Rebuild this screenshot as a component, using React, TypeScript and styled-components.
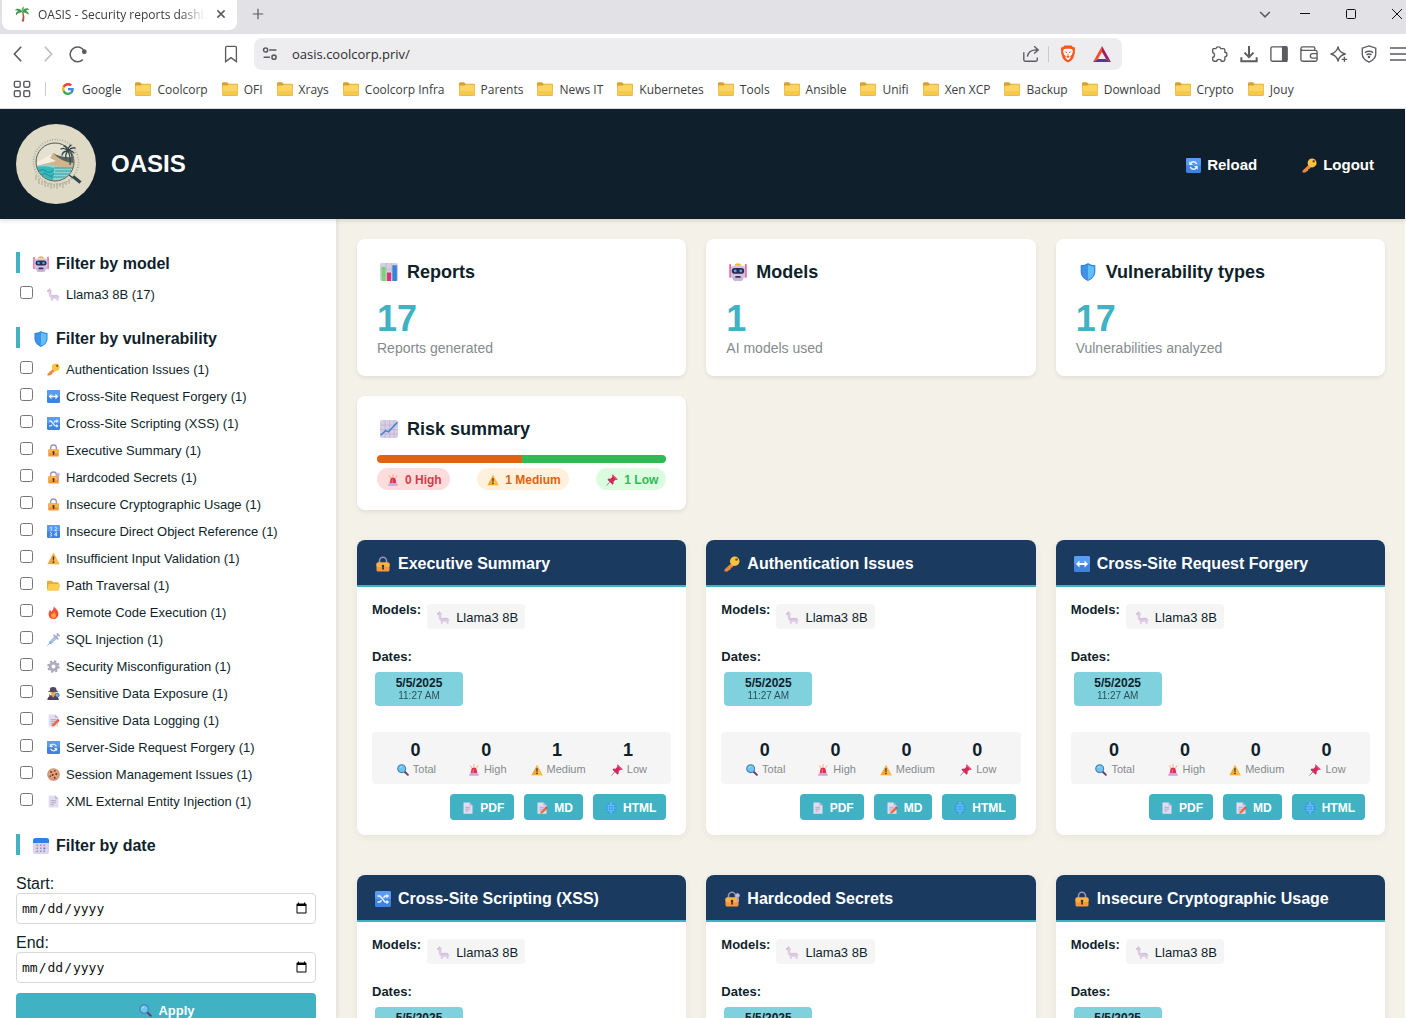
import React from 'react';
import styled, { createGlobalStyle } from 'styled-components';

/* ---------- palette ---------- */

const c = {
  night: '#0f1f2b',
  navy: '#1a3a5f',
  teal: '#40b2c3',
  tealSoft: '#7fd1dd',
  sand: '#f4f1e8',
  mute: '#858b8e',
  panel: '#f5f5f6',
  chrome: '#5b5b60',
};

const GlobalStyle = createGlobalStyle`
  *, *::before, *::after { box-sizing: border-box; }
  body {
    margin: 0;
    background: #fff;
    color: ${c.night};
    font-family: "Liberation Sans", Arial, sans-serif;
  }
  h1, h2, h3, p, ul { margin: 0; padding: 0; }
  ul { list-style: none; }
  button { font-family: inherit; cursor: pointer; }
`;

/* ---------- emoji drawings (32 x 32 grid) ---------- */

const blueTile = (
  <>
    <rect x="0" y="0" width="32" height="32" rx="3" fill="#3f83e0" />
    <rect x="0" y="0" width="32" height="16" rx="3" fill="#5a9cf0" />
  </>
);

const padlock = (
  <>
    <path d="M9 15V9.500a7 7 0 0 1 14 0V15" fill="none" stroke="#9a93b5" strokeWidth="3.200" />
    <rect x="3" y="13" width="26" height="18" rx="3" fill="#f3983b" />
    <rect x="3" y="13" width="26" height="9" rx="3" fill="#fbb347" />
    <circle cx="16" cy="20" r="2.600" fill="#4b2c35" />
    <path d="M15 20h2.400l.8 7h-4z" fill="#4b2c35" />
  </>
);

const page = (
  <>
    <path d="M4 1h16l8 8v22H4z" fill="#e3dcf0" />
    <path d="M20 1l8 8h-8z" fill="#b9acd0" />
    <path d="M9 14h13M9 19h13M9 24h8" stroke="#a99fc4" strokeWidth="2.200" />
  </>
);

const art: Record<string, React.ReactNode> = {
  robot: (
    <>
      <path d="M2 3v22M30 3v22" stroke="#e0457e" strokeWidth="2.600" strokeLinecap="round" />
      <path d="M10 5c0-6 12-6 12 0z" fill="#f6b53c" />
      <rect x="3" y="5" width="26" height="23" rx="6" fill="#d3c3e2" />
      <rect x="7" y="24" width="18" height="8" rx="4" fill="#c7b3d8" />
      <rect x="5" y="9" width="22" height="10" rx="5" fill="#2b2b50" />
      <circle cx="11" cy="14" r="2.600" fill="#4ba8ef" />
      <circle cx="21" cy="14" r="2.600" fill="#4ba8ef" />
      <rect x="11" y="23" width="10" height="3.400" rx="1.700" fill="#41304f" />
    </>
  ),
  llama: (
    <>
      <path d="M4 4l2-3 1.500 3 3 .5v3l-1 9c1 2 4 1.500 9 1.500 6-1 9 0 10 3l1-1c1 3-1 4-2 5v6h-3l-1-5-9-.5-1 5.500h-3l-.5-7C6 22 5 19 5 15V9L1 8.500V5.500z" fill="#dccbe3" stroke="#dccbe3" strokeWidth="1.500" />
      <path d="M1 6h4v2.500H1zM6 1l1.500 3h-3z" fill="#d9a79d" />
      <path d="M10 18q5 3 9 1t8 1" stroke="#c2aecf" strokeWidth="1.500" fill="none" />
    </>
  ),
  shield: (
    <>
      <path d="M16 0c4 3 8 3.500 13 4v11c0 8-6 14-13 17C9 29 3 23 3 15V4c5-.5 9-1 13-4z" fill="#2f83dd" />
      <path d="M16 2.500c3.500 2.500 7.500 3 11 3.500V15c0 7-4 12-11 15z" fill="#63bff8" />
      <path d="M16 2.500c-3.500 2.500-7.500 3-11 3.500V15c0 7 4 12 11 15z" fill="#3f93e6" />
    </>
  ),
  key: (
    <>
      <path d="M15 14L1 27v4h6.500l2.500-3 3-.5.500-3.500 3-1 4-5z" fill="#e8893d" />
      <circle cx="21.500" cy="10.500" r="9.500" fill="#fbc33f" />
      <circle cx="25" cy="7" r="2.600" fill="#7a4d26" />
    </>
  ),
  leftright: (
    <>
      {blueTile}
      <path d="M4 16l7-7v5h10V9l7 7-7 7v-5H11v5z" fill="#fff" />
    </>
  ),
  shuffle: (
    <>
      {blueTile}
      <path d="M5 10h5l10 12h5M5 22h5l3-3.500M17 13.500l3-3.500h5" stroke="#eaf4ff" strokeWidth="2.800" fill="none" />
      <path d="M23 5.500l5.500 4.500-5.500 4.500zM23 17.500l5.500 4.500-5.500 4.500z" fill="#eaf4ff" />
    </>
  ),
  lock: padlock,
  lockkey: (
    <>
      {padlock}
      <circle cx="27" cy="9" r="4.500" fill="#c8b8d8" />
      <path d="M25.500 11h3.500v12l-3.500-2z" fill="#b39fca" />
    </>
  ),
  numbers: (
    <>
      {blueTile}
      <path d="M8 7l2.500-2v9M19 6.500c2-2.500 6-.5 4.500 2.500L19 14h6M7 19c4-2 6 3 2 4 4 .5 3 6-2 4M23 27.500V18l-5 6.500h7" stroke="#eaf4ff" strokeWidth="2" fill="none" />
    </>
  ),
  warning: (
    <>
      <path d="M16 2L31 30H1z" fill="#f8a63c" />
      <path d="M16 2L31 30H18z" fill="#fbbd4d" />
      <path d="M14 11h4l-.8 10h-2.400z" fill="#4b2f2a" />
      <circle cx="16" cy="25" r="2.200" fill="#4b2f2a" />
    </>
  ),
  folder: (
    <>
      <path d="M0 6q0-2 2-2h10l3 4h12q2 0 2 2v17H2q-2 0-2-2z" fill="#e9a93a" />
      <path d="M4 12h26q2.500 0 2 2l-2 13q-.5 2-3 2H3q-3 0-2.500-3z" fill="#fbcd57" />
    </>
  ),
  fire: (
    <>
      <path d="M17 0c1 5 11 9 11 19 0 8-5 13-12 13S4 27 4 20c0-5 2-7 3-10 2 1 3 3 3.500 5 3-4 6.500-8 6.500-15z" fill="#ee4f35" />
      <path d="M17 13c1 4 5 6 5 11 0 4-3 6-6 6s-6-2-6-6c0-3 2-4 2.500-6l2 2.500c1.500-2 2.500-4 2.500-7.500z" fill="#fba234" />
    </>
  ),
  syringe: (
    <>
      <path d="M1 31l8-9" stroke="#8e97ad" strokeWidth="2" />
      <path d="M5 22L20 6l6.500 6.500L10 27H5z" fill="#86b4ea" />
      <path d="M9 19l9-9 5 5-9 8z" fill="#b5c6e6" />
      <path d="M17 5l10 10M24 8l4-4M25 2l5 5" stroke="#a9a6be" strokeWidth="3.500" strokeLinecap="round" />
    </>
  ),
  gear: (
    <>
      <circle cx="16" cy="16" r="12.500" fill="none" stroke="#aca6ba" strokeWidth="6" strokeDasharray="5 4.800" />
      <circle cx="16" cy="16" r="8.500" fill="none" stroke="#b0abbd" strokeWidth="7" />
    </>
  ),
  detective: (
    <>
      <path d="M1 32c0-8 6-12 14-12s14 4 14 12z" fill="#4c3e5d" />
      <path d="M11 20h8l-4 7z" fill="#e9b23c" />
      <circle cx="15" cy="14" r="6.500" fill="#efb04c" />
      <path d="M8 2q7-4 14 0l2 7q4 .5 5 2-14 4-27 0 1-1.500 5-2z" fill="#51456a" />
      <path d="M5 17l5 4-4 4z" fill="#7b4d8b" />
      <circle cx="25" cy="20" r="5" fill="#6fb7ea" stroke="#3d4f78" strokeWidth="1.800" />
      <path d="M23 25l-4 6" stroke="#3d4f78" strokeWidth="3" />
    </>
  ),
  memo: (
    <>
      {page}
      <path d="M12 27L24 14l5 5-12 11-6 1z" fill="#ee6a3d" />
      <path d="M24 14l2-2q3 0 4.500 4L29 19z" fill="#d8355f" />
    </>
  ),
  reload: (
    <>
      {blueTile}
      <path d="M23 13c-3-6-10-7-14-1M9 19c3 6 10 7 14 1" stroke="#eaf4ff" strokeWidth="3" fill="none" />
      <path d="M7 7v8h8zM25 25v-8h-8z" fill="#eaf4ff" />
    </>
  ),
  cookie: (
    <>
      <circle cx="16" cy="16" r="15.500" fill="#d08b68" />
      <circle cx="16" cy="15" r="13" fill="#e2a27a" />
      <g fill="#6d3a38">
        <circle cx="10" cy="10" r="2.600" />
        <circle cx="19" cy="7" r="2.200" />
        <circle cx="23" cy="15" r="2.800" />
        <circle cx="14" cy="17" r="2.600" />
        <circle cx="8" cy="20" r="2" />
        <circle cx="19" cy="24" r="2.600" />
      </g>
    </>
  ),
  page,
  calendar: (
    <>
      <rect x="0" y="1" width="32" height="31" rx="4" fill="#dcd3ea" />
      <path d="M0 10V5q0-5 5-5h22q5 0 5 5v5z" fill="#2f7fe6" />
      <path d="M7 13h3v3H7zm7 0h3v3h-3zm7 0h3v3h-3zM7 19h3v3H7zm7 0h3v3h-3zM7 25h3v3H7zm7 0h3v3h-3zm7 0h3v3h-3z" fill="#9a8fb8" />
      <path d="M21 19h3.500v3.500H21z" fill="#2f7fe6" />
    </>
  ),
  search: (
    <>
      <path d="M20 20l9 9" stroke="#6b3a6e" strokeWidth="5" strokeLinecap="round" />
      <circle cx="12.500" cy="12.500" r="10.500" fill="#6cc6ef" stroke="#4a7fb0" strokeWidth="3" />
      <path d="M7 11q2-4 6-4" stroke="#c3ecff" strokeWidth="2" fill="none" />
    </>
  ),
  bars: (
    <>
      <rect x="0" y="0" width="32" height="32" rx="3" fill="#d5cde2" />
      <path d="M0 11h32M0 21h32M11 0v32M21 0v32" stroke="#b5abc9" strokeWidth="1" />
      <rect x="3" y="7" width="7" height="25" fill="#76d672" />
      <rect x="12.500" y="17" width="7" height="15" fill="#d93369" />
      <rect x="22" y="4" width="8" height="28" fill="#3583dc" />
    </>
  ),
  trend: (
    <>
      <rect x="0" y="0" width="32" height="32" rx="3" fill="#d8cfe6" />
      <path d="M0 9h32M0 17h32M0 25h32M9 0v32M17 0v32M25 0v32" stroke="#b3a8c9" strokeWidth="1" />
      <path d="M1 27l9-8 5 2L31 4" stroke="#3c83c9" strokeWidth="2.600" fill="none" />
    </>
  ),
  siren: (
    <>
      <path d="M16 1v6M6 4l4 6M27 4l-4 6" stroke="#f59a5b" strokeWidth="2.400" />
      <path d="M7 25L9.500 12q6.500-5 13 0L25 25z" fill="#e0304f" />
      <path d="M13 14h3v10h-4z" fill="#f4697a" />
      <path d="M3 31q0-7 7-7h12q7 0 7 7z" fill="#c6aadb" />
    </>
  ),
  pin: (
    <>
      <path d="M13 18L2 30" stroke="#8d8aa0" strokeWidth="2.600" strokeLinecap="round" />
      <path d="M18 1L31 14l-3 2-3-.5-5 5 .5 5-3 3L4 15l3-3 5 .5 5-5L16 4z" fill="#d42a5b" />
      <path d="M18 1l13 13-3 2L15.500 4z" fill="#ef5578" />
    </>
  ),
  globe: (
    <>
      <circle cx="16" cy="16" r="15" fill="#2f9be6" />
      <path d="M2 16h28M4.500 9h23M4.500 23h23M16 1v30M16 1.500q-14 14.500 0 29M16 1.500q14 14.500 0 29" stroke="#7cc9f7" strokeWidth="1.800" fill="none" />
    </>
  ),
  palm: (
    <>
      <path d="M16 12q3 9-1 19h5q2-9-1-19z" fill="#b0563f" />
      <path d="M17 12C13 4 5 4 1 9c4-1 6 0 8 1-4 1-6 4-5 9 3-5 8-6 13-7zM17 12c3-9 11-9 14-4-4-1-6 1-7 2 4 1 6 4 5 8-3-4-7-5-12-6z" fill="#3f9a4b" />
      <path d="M17 12c-3-5-2-9 3-11-1 4 1 7-3 11z" fill="#57b55c" />
    </>
  ),
};

const EmojiBox = styled.span<{ $box: number }>`
  display: inline-flex;
  flex: none;
  justify-content: center;
  width: ${(p) => p.$box}px;
`;

const emojiBoxes: Record<number, number> = { 12: 16, 13: 17, 15: 17, 16: 22, 18: 24 };

const Emoji = ({ name, size }: { name: string; size: number }) => (
  <EmojiBox $box={emojiBoxes[size]} aria-hidden="true">
    <svg width={size} height={size} viewBox="0 0 32 32">
      {art[name]}
    </svg>
  </EmojiBox>
);

/* ---------- browser window ---------- */

const Browser = styled.div`
  display: flex;
  flex-direction: column;
  height: 100vh;
  overflow: hidden;
`;

const ChromeArea = styled.div`
  flex: none;
  border-bottom: 1px solid #d9dfe2;
  background: #fff;
  color: #3c3c41;
  font-family: "Open Sans", "Noto Sans", sans-serif;
  font-size: 12px;
`;

const TabStrip = styled.div`
  display: flex;
  align-items: flex-start;
  height: 34px;
  padding-left: 2px;
  background: #e2e1e6;
`;

const Tab = styled.div`
  display: flex;
  align-items: center;
  width: 235px;
  height: 30px;
  padding: 0 8px 2px 12px;
  border-radius: 0 0 8px 8px;
  background: #fff;
`;

const TabTitle = styled.span`
  flex: 1;
  min-width: 0;
  margin: 0 8px;
  overflow: hidden;
  white-space: nowrap;
  mask-image: linear-gradient(to right, #000 85%, transparent);
`;

const IconButton = styled.button<{ $w?: number; $h?: number }>`
  display: inline-flex;
  flex: none;
  align-items: center;
  justify-content: center;
  width: ${(p) => p.$w ?? 30}px;
  height: ${(p) => p.$h ?? 30}px;
  padding: 0;
  border: 0;
  background: none;
  color: ${c.chrome};
`;

const WindowButtons = styled.div`
  display: flex;
  gap: 16px;
  margin-right: -6px;
  margin-left: auto;
`;

const Toolbar = styled.div`
  display: flex;
  align-items: center;
  height: 40px;
  padding-left: 3px;
`;

const NavGroup = styled.div`
  display: flex;
  flex: none;
  width: 243px;
  margin-right: 8px;
`;

const BookmarkPage = styled(IconButton)`
  margin-left: auto;
`;

const AddressBar = styled.div`
  display: flex;
  flex: 1;
  align-items: center;
  height: 32px;
  padding: 0 1px 0 6px;
  border-radius: 8px;
  background: #ededf0;
`;

const Address = styled.input`
  flex: 1;
  min-width: 0;
  margin-left: 12px;
  padding: 0;
  border: 0;
  outline: 0;
  background: none;
  color: #2c2c31;
  font-family: inherit;
  font-size: 13px;
`;

const Divider = styled.span<{ $h: number }>`
  width: 1px;
  height: ${(p) => p.$h}px;
  margin: 0 4px 0 2px;
  background: #c9c9cf;
`;

const Extensions = styled.div`
  display: flex;
  flex: none;
  margin-right: -8px;
  margin-left: 82px;
`;

const Bookmarks = styled.nav`
  display: flex;
  align-items: center;
  height: 34px;
  padding: 0 0 4px 7px;
`;

const BookmarkDivider = styled(Divider)`
  margin: 0 0 0 8px;
`;

const BookmarkList = styled.ul`
  display: flex;
  gap: 14px;
  margin-left: 16px;
`;

const Bookmark = styled.a<{ $gap?: number }>`
  display: flex;
  align-items: center;
  gap: ${(p) => p.$gap ?? 6}px;
  color: inherit;
  text-decoration: none;
  white-space: nowrap;
`;

const Line = ({ size = 18, sw = 1.5, children }: { size?: number; sw?: number; children: React.ReactNode }) => (
  <svg width={size} height={size} viewBox="0 0 20 20" fill="none" stroke="currentColor" strokeWidth={sw} aria-hidden="true">
    {children}
  </svg>
);

const FolderIcon = () => (
  <svg width="16" height="14" viewBox="0 0 16 14" aria-hidden="true">
    <path d="M0 1.500Q0 .3 1.200 .3H5L6.500 1.700H14.500Q16 1.700 16 3V12.300Q16 13.800 14.500 13.800H1.500Q0 13.800 0 12.300z" fill="#d9a02e" />
    <path d="M.4 4.300Q.4 3.500 1.400 3.500H5.500L7 2.500H14.500Q15.600 2.500 15.600 3.500V11.500Q15.600 12.700 14.400 12.700H1.600Q.4 12.700 .4 11.500z" fill="#fbd563" />
    <path d="M.4 9h15.200v2.500Q15.600 12.700 14.400 12.700H1.600Q.4 12.700 .4 11.500z" fill="#f7c948" />
  </svg>
);

const GoogleIcon = () => (
  <svg width="12" height="12" viewBox="0 0 48 48" aria-hidden="true">
    <path fill="#ea4335" d="M24 9.500c3.500 0 6.700 1.200 9.200 3.600l6.900-6.900C35.900 2.400 30.500 0 24 0 14.600 0 6.500 5.400 2.600 13.200l8 6.200C12.400 13.700 17.700 9.500 24 9.500z" />
    <path fill="#4285f4" d="M47 24.600c0-1.600-.2-3.100-.4-4.600H24v9h12.900c-.6 3-2.300 5.500-4.800 7.200l7.700 6C44.400 38 47 31.800 47 24.600z" />
    <path fill="#fbbc05" d="M10.500 28.600a14.500 14.500 0 0 1 0-9.200l-8-6.200a24 24 0 0 0 0 21.600z" />
    <path fill="#34a853" d="M24 48c6.500 0 11.900-2.100 15.900-5.800l-7.700-6c-2.200 1.500-4.900 2.300-8.200 2.300-6.300 0-11.600-4.200-13.500-9.900l-8 6.200C6.500 42.600 14.600 48 24 48z" />
  </svg>
);

const bookmarkNames = [
  'Coolcorp', 'OFI', 'Xrays', 'Coolcorp Infra', 'Parents', 'News IT', 'Kubernetes', 'Tools',
  'Ansible', 'Unifi', 'Xen XCP', 'Backup', 'Download', 'Crypto', 'Jouy',
];

const BrowserChrome = () => (
  <ChromeArea>
    <TabStrip>
      <Tab>
        <svg width="16" height="16" viewBox="0 0 32 32" aria-hidden="true">{art.palm}</svg>
        <TabTitle>OASIS - Security reports dashboard</TabTitle>
        <IconButton $w={16} $h={16} aria-label="Close tab">
          <Line size={16} sw={1.9}><path d="M5.500 5.500l9 9M14.500 5.500l-9 9" /></Line>
        </IconButton>
      </Tab>
      <IconButton $w={42} $h={28} aria-label="New tab">
        <Line size={16}><path d="M10 3.500v13M3.500 10h13" /></Line>
      </IconButton>
      <WindowButtons>
        <IconButton $w={18} $h={28} aria-label="Search tabs">
          <Line size={16} sw={2}><path d="M4 7.500l6 6 6-6" /></Line>
        </IconButton>
        <IconButton $h={28} aria-label="Minimize">
          <svg width="10" height="10" viewBox="0 0 10 10"><path d="M0 4.500h10" stroke="#111" /></svg>
        </IconButton>
        <IconButton $h={28} aria-label="Maximize">
          <svg width="10" height="10" viewBox="0 0 10 10"><rect x=".5" y=".5" width="9" height="9" rx="1" fill="none" stroke="#111" /></svg>
        </IconButton>
        <IconButton $h={28} aria-label="Close">
          <svg width="10" height="10" viewBox="0 0 10 10"><path d="M0 0l10 10M10 0L0 10" stroke="#111" /></svg>
        </IconButton>
      </WindowButtons>
    </TabStrip>

    <Toolbar>
      <NavGroup>
        <IconButton aria-label="Back"><Line sw={1.8}><path d="M13.500 2L6 10l7.500 8" /></Line></IconButton>
        <IconButton aria-label="Forward">
          <Line sw={1.8}><path d="M6.500 2l7.500 8-7.500 8" stroke="#bcbcc2" /></Line>
        </IconButton>
        <IconButton aria-label="Reload page">
          <Line sw={1.7}>
            <path d="M15.500 16a8.200 8.200 0 1 1 1.500-9" />
            <circle cx="17" cy="7.500" r="1.800" fill="currentColor" />
          </Line>
        </IconButton>
        <BookmarkPage aria-label="Bookmark this page">
          <Line><path d="M4 3q0-1.500 1.500-1.500h9Q16 1.500 16 3v15.500l-6-4.500-6 4.500z" /></Line>
        </BookmarkPage>
      </NavGroup>
      <AddressBar>
        <IconButton $w={20} aria-label="Site information">
          <Line size={16} sw={1.9}>
            <circle cx="4.500" cy="5" r="2.600" /><path d="M9 5h9M2 14h8" />
            <circle cx="15" cy="14" r="2.600" />
          </Line>
        </IconButton>
        <Address aria-label="Address" defaultValue="oasis.coolcorp.priv/" />
        <IconButton aria-label="Share">
          <Line>
            <path d="M2 8v8.500Q2 18 3.500 18h12q1.500 0 1.500-1.500V14" />
            <path d="M6 13q1-7 9-7.500h2.500M13.500 1.500l4.500 4-4.500 4" />
          </Line>
        </IconButton>
        <Divider $h={16} />
        <IconButton aria-label="Brave Shields">
          <svg width="16" height="18" viewBox="0 0 18 20">
            <path d="M5 .5h8l1.500 1.500 2 .3L17 5l-.5 2 .3 1.500-2 6.500Q13 17.500 9 19.500 5 17.500 3.200 15l-2-6.500L1.500 7 1 5l.5-2.700 2-.3z" fill="#f9561c" />
            <path d="M4.500 4.500l3-.5H10.500l3 .5 1 2.500-1 3.500-2 2 .5 1.800L9 17l-3-2.700.5-1.800-2-2-1-3.500z" fill="#fff" />
            <path d="M5 7l3 .7-.6 1.500zM13 7l-3 .7.6 1.500zM9 9l.8 2.500-.8.800-.8-.8zM6.800 13L9 12l2.200 1L9 14.500z" fill="#f9561c" />
          </svg>
        </IconButton>
        <IconButton $w={38} aria-label="Brave Rewards">
          <svg width="18" height="16" viewBox="0 0 18 16">
            <path d="M9 0L0 16l5-3 4-7z" fill="#f4512c" />
            <path d="M9 0l9 16-5-3-4-7z" fill="#9e1f63" />
            <path d="M0 16h18l-5-3H5z" fill="#59359a" />
          </svg>
        </IconButton>
      </AddressBar>
      <Extensions>
        <IconButton aria-label="Extensions">
          <Line><path d="M3.500 4H6.500A2.800 2.300 0 0 1 12 4H15Q16.500 4 16.500 5.500V8A2.300 2.600 0 0 1 16.500 13.200V16.500Q16.500 18 15 18H12.500A2.500 2 0 0 0 7.500 18H4.500Q3 18 3 16.500V13.500A2 2.500 0 0 0 3 8.500V5z" strokeLinejoin="round" /></Line>
        </IconButton>
        <IconButton aria-label="Downloads">
          <Line sw={2.2}><path d="M10 1v12M5 8.500l5 5 5-5M1.500 13.500V18h17v-4.500" /></Line>
        </IconButton>
        <IconButton aria-label="Side panel">
          <Line>
            <rect x="1" y="2" width="18" height="16" rx="1.500" />
            <path d="M14 2h4.500v16H14z" fill="currentColor" />
          </Line>
        </IconButton>
        <IconButton aria-label="Wallet">
          <Line>
            <path d="M16.500 6V3.500Q16.500 2 15 2H3Q1 2 1 4v12q0 2 2 2h14q2 0 2-2V8q0-2-2-2H3Q1 6 1 4" />
            <path d="M19 9.500h-5a2.500 2.500 0 0 0 0 5h5" />
          </Line>
        </IconButton>
        <IconButton aria-label="Leo AI">
          <Line>
            <path d="M9 2q1 6 8 8-7 1.500-8 8-1.500-6.500-8-8 6.500-2 8-8z" strokeLinejoin="round" />
            <path d="M16 13v6M13 16h6" />
          </Line>
        </IconButton>
        <IconButton aria-label="VPN">
          <Line sw={1.5}>
            <path d="M10 1l7.500 2.500v6.500q0 5.500-7.500 9Q2.500 15.500 2.500 10V3.500z" />
            <path d="M5.500 8.500q4.500-3 9 0M7.200 11q2.800-2 5.600 0" />
            <circle cx="10" cy="13.300" r=".7" fill="currentColor" />
          </Line>
        </IconButton>
        <IconButton aria-label="Menu">
          <svg width="18" height="14" viewBox="0 0 18 14"><path d="M0 1h18M0 7h18M0 13h18" stroke="#5b5b60" strokeWidth="1.500" /></svg>
        </IconButton>
      </Extensions>
    </Toolbar>

    <Bookmarks aria-label="Bookmarks">
      <IconButton aria-label="All bookmarks">
        <Line sw={1.6}>
          <rect x="1.500" y="1.500" width="6.500" height="6.500" rx="1.500" />
          <rect x="12" y="1.500" width="6.500" height="6.500" rx="1.500" />
          <rect x="1.500" y="12" width="6.500" height="6.500" rx="1.500" />
          <rect x="12" y="12" width="6.500" height="6.500" rx="1.500" />
        </Line>
      </IconButton>
      <BookmarkDivider $h={14} />
      <BookmarkList>
        <li><Bookmark $gap={8} href="#google"><GoogleIcon />Google</Bookmark></li>
        {bookmarkNames.map((name) => (
          <li key={name}>
            <Bookmark href={`#${name}`}><FolderIcon />{name}</Bookmark>
          </li>
        ))}
      </BookmarkList>
    </Bookmarks>
  </ChromeArea>
);

/* ---------- page header ---------- */

const Viewport = styled.div`
  display: flex;
  flex: 1;
  flex-direction: column;
  min-height: 0;
  padding-right: 1px;
`;

const PageHeader = styled.header`
  position: relative;
  z-index: 1;
  display: flex;
  flex: none;
  align-items: center;
  gap: 15px;
  padding: 15px 16px;
  background: ${c.night};
  box-shadow: 0 2px 4px rgba(0, 0, 0, 0.12);
  color: #fff;
`;

const Brand = styled.h1`
  font-size: 24px;
  line-height: 28px;
`;

const HeaderNav = styled.nav`
  display: flex;
  gap: 14px;
  margin-left: auto;
`;

const HeaderLink = styled.a`
  display: flex;
  align-items: center;
  gap: 5px;
  padding: 10px 15px 8px;
  color: inherit;
  font-size: 15px;
  font-weight: bold;
  line-height: 18px;
  text-decoration: none;
`;

const Logo = () => (
  <svg width="80" height="80" viewBox="0 0 80 80" role="img" aria-label="OASIS logo">
    <defs>
      <clipPath id="lens"><circle cx="39" cy="38" r="18.500" /></clipPath>
    </defs>
    <circle cx="40" cy="40" r="40" fill="#dedac5" />
    <circle cx="40" cy="38" r="22.500" fill="none" stroke="#a3a697" strokeWidth="1.800" strokeDasharray=".8 1.800" />
    <path d="M20 51v5M23 54v6M26 57v4M29 57v6M32 59v4M35 59v6M38 60v4M41 59v6M44 59v4M47 58v6M50 57v4M53 55v5" stroke="#9fa192" strokeWidth=".9" />
    <g clipPath="url(#lens)">
      <rect x="20" y="18" width="40" height="40" fill="#e4e1d0" />
      <path d="M20 40l17-11 8 5 15 4v7H20z" fill="#d3b48a" />
      <path d="M20 39l17-10-3 5 6 3-20 5z" fill="#f4efe2" />
      <path d="M37 29q7 5 22 4v6q-13 0-22-10z" fill="#59625f" />
      <path d="M20 42q12-3 20 0t20 0v16H20z" fill="#8fd3cf" />
      <path d="M20 43q10-2 18 1l-1 14H20z" fill="#35b9bd" />
      <path d="M22 47q5-3 8 0t8-1M25 51q4-3 7 0t6-1" stroke="#1f9098" fill="none" />
      <path d="M38 44h20M39 47h19M37 50h19M35 53h17" stroke="#2f9ea5" strokeWidth="1.200" />
    </g>
    <circle cx="39" cy="38" r="19" fill="none" stroke="#4a5c5b" strokeWidth="1" />
    <path d="M53 51l4 3" stroke="#33474a" strokeWidth="1.500" />
    <path d="M57 52.500l7.500 6" stroke="#33474a" strokeWidth="3.200" />
    <path d="M52 27q3 6 2 14" stroke="#33474a" strokeWidth="1.200" fill="none" />
    <path d="M52 27q-4-4-7-2M52 27q-5 0-6 4M52 27q-3 3-2 7M52 27q4 2 4 6M52 27q4-1 6 2M52 27q3-4 7-3M52 27q0-4 3-6M52 27q-2-5-4-5" fill="none" stroke="#33474a" strokeWidth="1.300" strokeLinecap="round" />
  </svg>
);

/* ---------- sidebar ---------- */

const Columns = styled.div`
  display: flex;
  flex: 1;
  min-height: 0;
  overflow: hidden;
  background: ${c.sand};
`;

const Sidebar = styled.aside`
  flex: none;
  width: 337px;
  padding: 33px 20px 20px 16px;
  border-right: 1px solid #e9e7e1;
  background: #fff;
  box-shadow: 1px 0 3px rgba(0, 0, 0, 0.08);
`;

const FilterGroup = styled.section`
  margin-bottom: 19px;
`;

const FilterTitle = styled.h3`
  display: flex;
  align-items: center;
  gap: 4px;
  margin-bottom: 8px;
  padding: 2px 0 0 10px;
  border-left: 4px solid ${c.teal};
  font-size: 16px;
  line-height: 19px;
`;

const FilterRow = styled.label`
  display: flex;
  align-items: center;
  gap: 4px;
  height: 27px;
  font-size: 13px;
`;

const Tick = styled.input`
  align-self: flex-start;
  width: 13px;
  height: 13px;
  margin: 5px 8px 0 4px;
`;

const DateField = styled.label`
  display: block;
  margin-bottom: 10px;
  font-size: 16px;
  line-height: 18px;

  &:first-of-type { margin-top: 20px; }
`;

const DateInput = styled.input`
  display: block;
  width: 100%;
  height: 31px;
  padding: 0 5px 0 4px;
  border: 1px solid #d8d8d8;
  border-radius: 4px;
  background: #fff;
  color: #111;
  font-family: "DejaVu Sans Mono", monospace;
  font-size: 13px;
`;

const ApplyButton = styled.button`
  display: flex;
  align-items: center;
  justify-content: center;
  gap: 4px;
  width: 100%;
  height: 35px;
  border: 0;
  border-radius: 4px;
  background: ${c.teal};
  color: #fff;
  font-size: 13px;
  font-weight: bold;
`;

const vulnerabilities: [string, string][] = [
  ['key', 'Authentication Issues'],
  ['leftright', 'Cross-Site Request Forgery'],
  ['shuffle', 'Cross-Site Scripting (XSS)'],
  ['lock', 'Executive Summary'],
  ['lockkey', 'Hardcoded Secrets'],
  ['lock', 'Insecure Cryptographic Usage'],
  ['numbers', 'Insecure Direct Object Reference'],
  ['warning', 'Insufficient Input Validation'],
  ['folder', 'Path Traversal'],
  ['fire', 'Remote Code Execution'],
  ['syringe', 'SQL Injection'],
  ['gear', 'Security Misconfiguration'],
  ['detective', 'Sensitive Data Exposure'],
  ['memo', 'Sensitive Data Logging'],
  ['reload', 'Server-Side Request Forgery'],
  ['cookie', 'Session Management Issues'],
  ['page', 'XML External Entity Injection'],
];

const FilterOption = ({ icon, text }: { icon: string; text: string }) => (
  <FilterRow>
    <Tick type="checkbox" />
    <Emoji name={icon} size={13} />
    {text}
  </FilterRow>
);

const Filters = () => (
  <Sidebar>
    <FilterGroup>
      <FilterTitle><Emoji name="robot" size={16} />Filter by model</FilterTitle>
      <FilterOption icon="llama" text="Llama3 8B (17)" />
    </FilterGroup>
    <FilterGroup>
      <FilterTitle><Emoji name="shield" size={16} />Filter by vulnerability</FilterTitle>
      {vulnerabilities.map(([icon, name]) => (
        <FilterOption key={name} icon={icon} text={`${name} (1)`} />
      ))}
    </FilterGroup>
    <FilterGroup>
      <FilterTitle><Emoji name="calendar" size={16} />Filter by date</FilterTitle>
      <DateField>Start:<DateInput type="date" /></DateField>
      <DateField>End:<DateInput type="date" /></DateField>
      <ApplyButton><Emoji name="search" size={13} />Apply</ApplyButton>
    </FilterGroup>
  </Sidebar>
);

/* ---------- dashboard ---------- */

const Main = styled.main`
  flex: 1;
  min-width: 0;
  padding: 20px;
`;

const Grid = styled.div<{ $rowGap: number }>`
  display: grid;
  grid-template-columns: repeat(3, minmax(0, 1fr));
  gap: ${(p) => p.$rowGap}px 20px;
`;

const StatGrid = styled(Grid)`
  margin-bottom: 30px;
`;

const StatCard = styled.section`
  padding: 20px;
  border-radius: 8px;
  background: #fff;
  box-shadow: 0 2px 4px rgba(0, 0, 0, 0.08);
`;

const StatTitle = styled.h2`
  display: flex;
  align-items: center;
  gap: 6px;
  margin-bottom: 15px;
  padding-top: 2px;
  font-size: 18px;
  line-height: 22px;
`;

const StatValue = styled.p`
  color: ${c.teal};
  font-size: 36px;
  font-weight: bold;
  line-height: 42px;
`;

const StatNote = styled.p`
  color: ${c.mute};
  font-size: 14px;
  line-height: 16px;
`;

const RiskBar = styled.div`
  display: flex;
  height: 8px;
  margin-bottom: 5px;
  overflow: hidden;
  border-radius: 4px;
`;

const RiskPart = styled.span<{ $share: number; $color: string }>`
  flex: ${(p) => p.$share};
  background: ${(p) => p.$color};
`;

const Badges = styled.div`
  display: flex;
  justify-content: space-between;
`;

const Badge = styled.span<{ $bg: string; $fg: string }>`
  display: flex;
  align-items: center;
  gap: 4px;
  height: 22px;
  padding: 1px 8px 0;
  border-radius: 11px;
  background: ${(p) => p.$bg};
  color: ${(p) => p.$fg};
  font-size: 12px;
  font-weight: bold;
`;

const ReportCard = styled.article`
  overflow: hidden;
  border-radius: 8px;
  background: #fff;
  box-shadow: 0 2px 8px rgba(0, 0, 0, 0.06);
`;

const ReportTitle = styled.h2`
  display: flex;
  align-items: center;
  gap: 4px;
  padding: 14px 15px 12px;
  border-bottom: 2px solid ${c.teal};
  background: ${c.navy};
  color: #fff;
  font-size: 16px;
  line-height: 19px;
`;

const ReportBody = styled.div`
  padding: 15px;
`;

const ModelRow = styled.div`
  display: flex;
  align-items: flex-start;
  gap: 6px;
  margin-bottom: 20px;
`;

const FieldName = styled.h3`
  font-size: 13px;
  line-height: 15px;
`;

const ModelChip = styled.span`
  display: flex;
  align-items: center;
  gap: 4px;
  height: 25px;
  margin-top: 2px;
  padding: 2px 7px 0 8px;
  border-radius: 4px;
  background: ${c.panel};
  font-size: 13px;
`;

const DateChip = styled.button`
  display: flex;
  flex-direction: column;
  align-items: center;
  justify-content: center;
  width: 88px;
  height: 34px;
  margin: 8px 3px 26px;
  padding: 0;
  border: 0;
  border-radius: 4px;
  background: ${c.tealSoft};
  color: ${c.night};
  font-size: 12px;
  font-weight: bold;
  line-height: 14px;
`;

const Time = styled.span`
  font-size: 10px;
  font-weight: normal;
  line-height: 12px;
  opacity: 0.75;
`;

const Counts = styled.dl`
  display: grid;
  grid-template-columns: repeat(4, 1fr);
  margin: 0 0 10px;
  padding: 8px;
  border-radius: 4px;
  background: #f5f5f5;
`;

const Count = styled.div`
  display: flex;
  flex-direction: column-reverse;
  align-items: center;
  gap: 3px;
`;

const CountValue = styled.dd`
  margin: 0;
  font-size: 18px;
  font-weight: bold;
  line-height: 20px;
`;

const CountName = styled.dt`
  display: flex;
  align-items: center;
  gap: 2px;
  color: ${c.mute};
  font-size: 11px;
  line-height: 13px;
`;

const Downloads = styled.div`
  display: flex;
  justify-content: flex-end;
  gap: 10px;
  padding-right: 5px;
`;

const DownloadButton = styled.button`
  display: flex;
  align-items: center;
  gap: 4px;
  height: 26px;
  padding: 1px 10px 0;
  border: 0;
  border-radius: 4px;
  background: ${c.teal};
  color: #fff;
  font-size: 12px;
  font-weight: bold;
`;

const stats = [
  { icon: 'bars', title: 'Reports', value: 17, note: 'Reports generated' },
  { icon: 'robot', title: 'Models', value: 1, note: 'AI models used' },
  { icon: 'shield', title: 'Vulnerability types', value: 17, note: 'Vulnerabilities analyzed' },
];

const reports = [
  { icon: 'lock', title: 'Executive Summary', counts: [0, 0, 1, 1] },
  { icon: 'key', title: 'Authentication Issues', counts: [0, 0, 0, 0] },
  { icon: 'leftright', title: 'Cross-Site Request Forgery', counts: [0, 0, 0, 0] },
  { icon: 'shuffle', title: 'Cross-Site Scripting (XSS)', counts: [0, 0, 0, 0] },
  { icon: 'lockkey', title: 'Hardcoded Secrets', counts: [0, 0, 0, 0] },
  { icon: 'lock', title: 'Insecure Cryptographic Usage', counts: [0, 0, 0, 0] },
];

const countNames: [string, string][] = [
  ['search', 'Total'],
  ['siren', 'High'],
  ['warning', 'Medium'],
  ['pin', 'Low'],
];

const formats: [string, string][] = [
  ['page', 'PDF'],
  ['memo', 'MD'],
  ['globe', 'HTML'],
];

const Report = ({ icon, title, counts }: (typeof reports)[number]) => (
  <ReportCard>
    <ReportTitle><Emoji name={icon} size={16} />{title}</ReportTitle>
    <ReportBody>
      <ModelRow>
        <FieldName>Models:</FieldName>
        <ModelChip><Emoji name="llama" size={13} />Llama3 8B</ModelChip>
      </ModelRow>
      <FieldName>Dates:</FieldName>
      <DateChip>5/5/2025<Time>11:27 AM</Time></DateChip>
      <Counts>
        {countNames.map(([countIcon, name], i) => (
          <Count key={name}>
            <CountName><Emoji name={countIcon} size={12} />{name}</CountName>
            <CountValue>{counts[i]}</CountValue>
          </Count>
        ))}
      </Counts>
      <Downloads>
        {formats.map(([formatIcon, name]) => (
          <DownloadButton key={name}><Emoji name={formatIcon} size={12} />{name}</DownloadButton>
        ))}
      </Downloads>
    </ReportBody>
  </ReportCard>
);

export default function App() {
  return (
    <>
      <GlobalStyle />
      <Browser>
        <BrowserChrome />
        <Viewport>
          <PageHeader>
            <Logo />
            <Brand>OASIS</Brand>
            <HeaderNav>
              <HeaderLink href="#reload"><Emoji name="reload" size={15} />Reload</HeaderLink>
              <HeaderLink href="#logout"><Emoji name="key" size={15} />Logout</HeaderLink>
            </HeaderNav>
          </PageHeader>
          <Columns>
            <Filters />
            <Main>
              <StatGrid $rowGap={20}>
                {stats.map((s) => (
                  <StatCard key={s.title}>
                    <StatTitle><Emoji name={s.icon} size={18} />{s.title}</StatTitle>
                    <StatValue>{s.value}</StatValue>
                    <StatNote>{s.note}</StatNote>
                  </StatCard>
                ))}
                <StatCard>
                  <StatTitle><Emoji name="trend" size={18} />Risk summary</StatTitle>
                  <RiskBar>
                    <RiskPart $share={1} $color="#e2620e" />
                    <RiskPart $share={1} $color="#2fba54" />
                  </RiskBar>
                  <Badges>
                    <Badge $bg="#fddcdc" $fg="#d63a4a"><Emoji name="siren" size={12} />0 High</Badge>
                    <Badge $bg="#fff1dc" $fg="#e2620e"><Emoji name="warning" size={12} />1 Medium</Badge>
                    <Badge $bg="#dcfce0" $fg="#2fba54"><Emoji name="pin" size={12} />1 Low</Badge>
                  </Badges>
                </StatCard>
              </StatGrid>
              <Grid $rowGap={40}>
                {reports.map((r) => (
                  <Report key={r.title} {...r} />
                ))}
              </Grid>
            </Main>
          </Columns>
        </Viewport>
      </Browser>
    </>
  );
}
